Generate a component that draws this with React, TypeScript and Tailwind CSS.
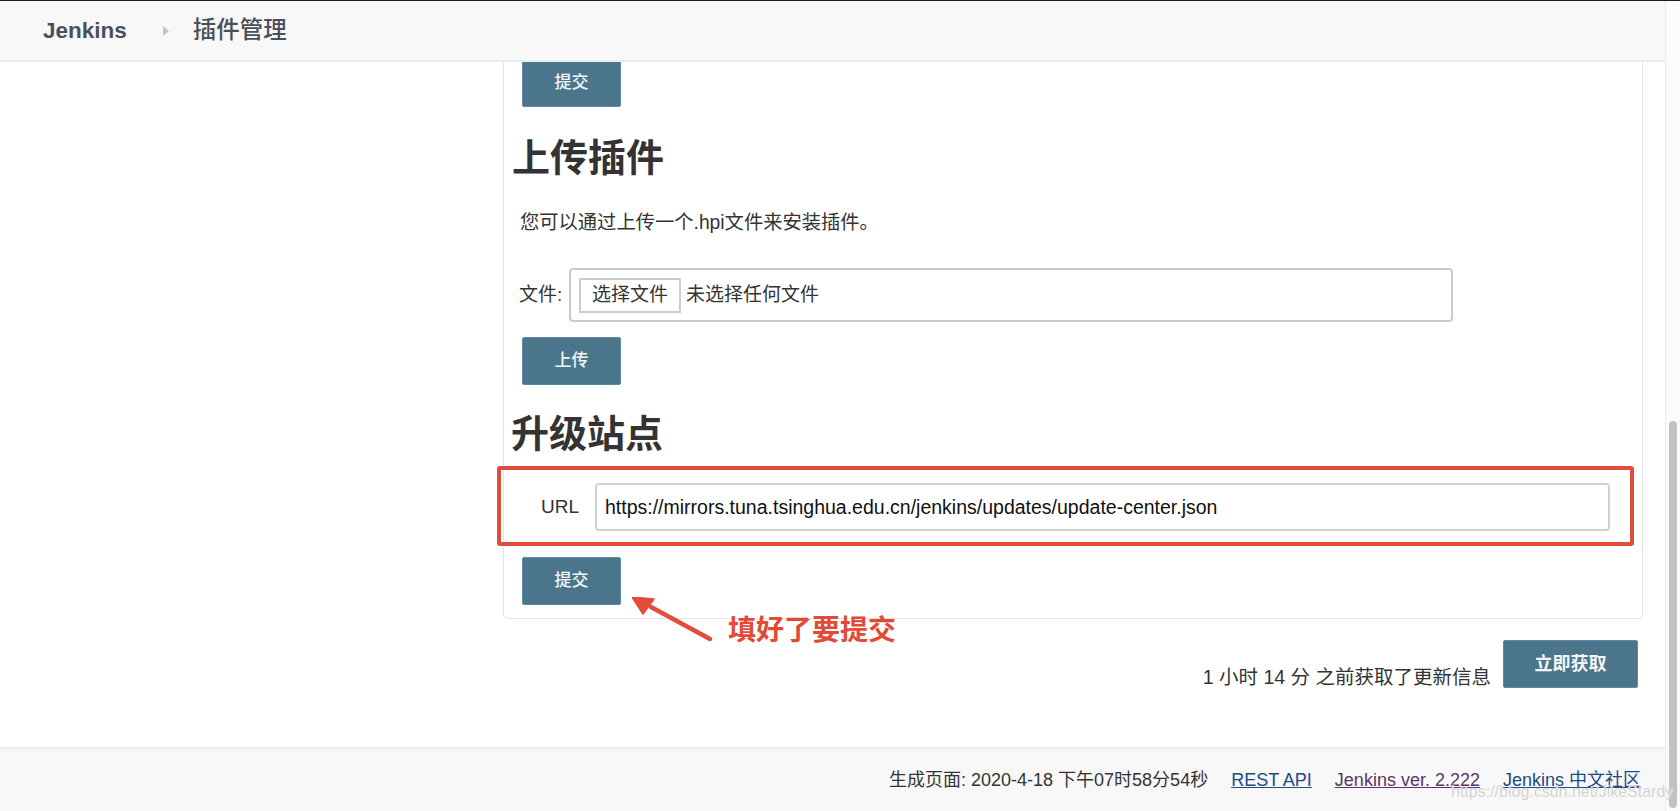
import React from "react";

function Btn({ children, className = "" }: { children: React.ReactNode; className?: string }) {
  return (
    <button
      className={`h-[48px] w-[99px] shrink-0 bg-[#4b758b] border border-[#5e8ba3] rounded-[2px] text-[17px] font-medium text-[#f2f5f7] flex items-center justify-center ${className}`}
    >
      {children}
    </button>
  );
}

export default function App() {
  return (
    <div className="w-[1680px] h-[811px] overflow-hidden flex bg-white border-t border-[#1c1c1c] text-[#333] font-['Liberation_Sans','Noto_Sans_CJK_SC',sans-serif]">
      <div className="flex-1 min-w-0 flex flex-col">
        <header className="h-[61px] shrink-0 bg-[#f8f8f8] border-b-2 border-[#e8edf0] flex items-center pl-[43px] relative z-10">
          <span className="text-[22.5px] font-bold text-[#4a5059]">Jenkins</span>
          <svg className="ml-[36px]" width="6" height="10" viewBox="0 0 6 10">
            <path d="M0 0 L6 5 L0 10 Z" fill="#c6c6c6" />
          </svg>
          <span className="ml-[24px] text-[23.5px] font-medium text-[#4a5059]">插件管理</span>
        </header>

        <main className="flex-1 min-h-0 flex overflow-hidden">
          <div className="w-[503px] shrink-0" />
          <div className="w-[1140px] shrink-0 flex flex-col">
            <div className="border-x border-b border-[#e4e4e4] rounded-b-[5px] px-[18px] pb-[13px] flex flex-col items-start">
              <Btn className="mt-[-3px]">提交</Btn>

              <h2 className="mt-[28px] ml-[-10px] text-[38px] leading-[46px] font-bold text-[#333]">上传插件</h2>
              <p className="mt-[28px] ml-[-2px] text-[19.3px] leading-[28px]">您可以通过上传一个.hpi文件来安装插件。</p>

              <div className="mt-[31px] ml-[-3px] flex items-center">
                <span className="text-[19px] leading-[28px] w-[44px]">文件:</span>
                <div className="ml-[6px] w-[884px] h-[54px] border-2 border-[#cacaca] rounded-[4px] flex items-center pl-[8px]">
                  <div className="h-[35px] w-[102px] border-2 border-[#cccccc] bg-white text-[19px] flex items-center justify-center">
                    选择文件
                  </div>
                  <span className="ml-[5px] text-[19px]">未选择任何文件</span>
                </div>
              </div>

              <Btn className="mt-[15px]">上传</Btn>

              <h2 className="mt-[26px] ml-[-11px] text-[38px] leading-[46px] font-bold text-[#333]">升级站点</h2>

              <div className="relative mt-[26px] flex items-center">
                <span className="ml-[19px] text-[19px] w-[38px]">URL</span>
                <input
                  readOnly
                  value="https://mirrors.tuna.tsinghua.edu.cn/jenkins/updates/update-center.json"
                  className="ml-[16px] w-[1015px] h-[48px] border-2 border-[#d0d0d0] rounded-[4px] px-[8px] text-[19.5px] text-[#111] outline-none"
                />
                <div className="absolute top-[-17px] left-[-25px] w-[1137px] h-[80px] border-4 border-[#e34b3c] rounded-[3px] pointer-events-none" />
              </div>

              <div className="relative mt-[26px]">
                <Btn>提交</Btn>
                <svg className="absolute left-[110px] top-[40px]" width="84" height="48" viewBox="0 0 84 48">
                  <line x1="19" y1="10" x2="78" y2="42" stroke="#e34b3c" strokeWidth="4.5" strokeLinecap="round" />
                  <path d="M0 0 L22 2 L11 17 Z" fill="#e34b3c" stroke="#e34b3c" strokeWidth="1.5" strokeLinejoin="round" />
                </svg>
                <span className="absolute left-[206px] top-[56px] whitespace-nowrap text-[28px] leading-[36px] font-bold text-[#e24a36]">
                  填好了要提交
                </span>
              </div>
            </div>

            <div className="flex justify-end items-start mt-[21px] pr-[5px]">
              <span className="mt-[24px] mr-[12px] text-[19.5px] leading-[26px]">1 小时 14 分 之前获取了更新信息</span>
              <Btn className="w-[135px] h-[46px] text-[18px] font-semibold">立即获取</Btn>
            </div>
          </div>
        </main>

        <footer className="relative h-[64px] shrink-0 bg-[#f8f8f8] border-t-2 border-[#e9edf0] flex items-center justify-end pr-[24px] gap-[23px] text-[18px]">
          <span>生成页面: 2020-4-18 下午07时58分54秒</span>
          <a className="underline text-[#204a87]">REST API</a>
          <a className="underline text-[#5c3566]">Jenkins ver. 2.222</a>
          <a className="underline text-[#204a87]">Jenkins 中文社区</a>
          <span className="absolute left-[1451px] top-[34px] text-[16px] leading-[18px] text-[#d4d4d4] [text-shadow:0_0_1px_#fff] whitespace-nowrap pointer-events-none">
            https://blog.csdn.net/JikeStardy
          </span>
        </footer>
      </div>

      <div className="w-[15px] shrink-0 border-l border-[#ebebeb] bg-[#fbfbfb] pl-[3px] pt-[420px]">
        <div className="w-[8px] h-[387px] rounded-full bg-[#c2c2c2]" />
      </div>
    </div>
  );
}
